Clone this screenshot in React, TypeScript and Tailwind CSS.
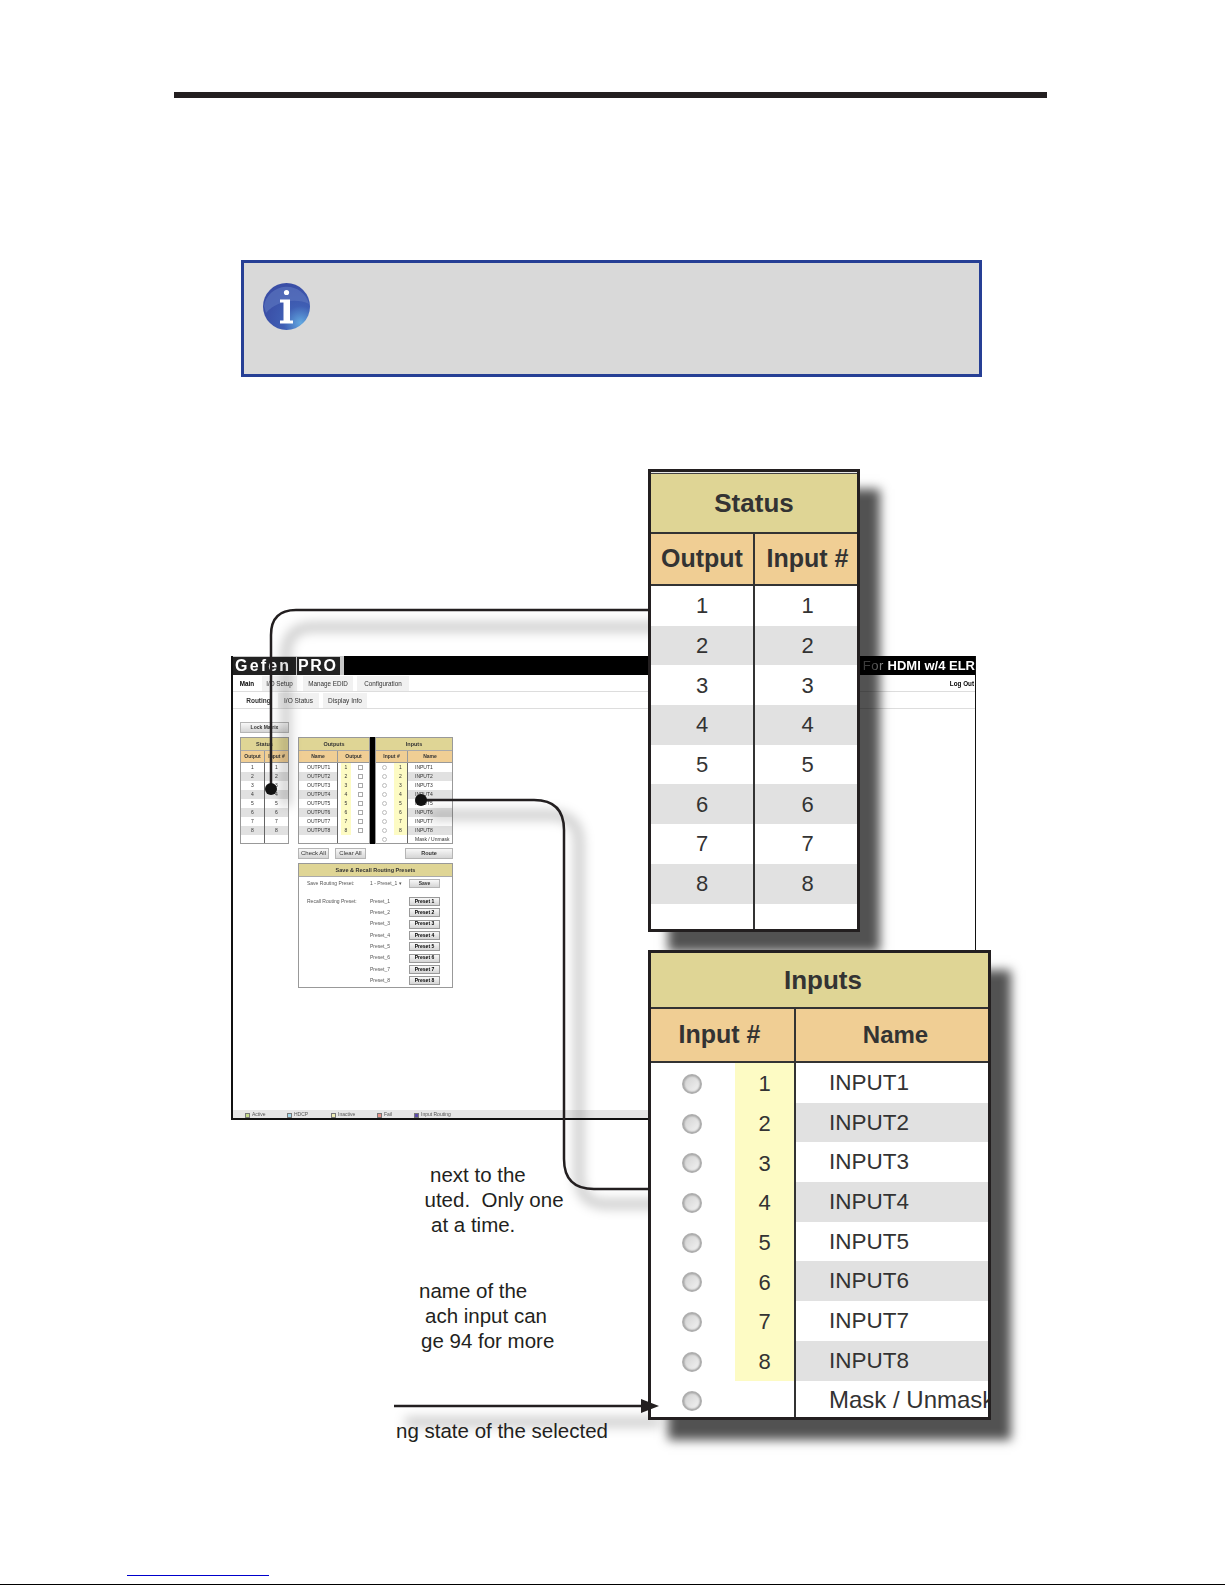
const numbers = [1, 2, 3, 4, 5, 6, 7, 8]
const legend = [
  { label: 'Active', width: 'w-[42px]', color: 'bg-[#c5dc8c]' },
  { label: 'HDCP', width: 'w-[44px]', color: 'bg-[#a5d8ea]' },
  { label: 'Inactive', width: 'w-[46px]', color: 'bg-[#ecebb4]' },
  { label: 'Fail', width: 'w-[37px]', color: 'bg-[#e8938a]' },
  { label: 'Input Routing', width: 'w-[70px]', color: 'bg-[#5a4aa8]' },
]

function MiniButton({ label, className }: { label: string; className: string }) {
  return (
    <div
      className={`flex items-center justify-center border border-[#b5b5b5] bg-gradient-to-b from-[#f8f8f8] to-[#d5d5d5] text-[#333] ${className}`}
    >
      {label}
    </div>
  )
}

function MiniStatus() {
  return (
    <div className="w-[49px] h-[107px] border border-[#999] flex flex-col">
      <div className="h-[13px] shrink-0 bg-[#dfd595] border-b border-[#aaa] flex items-center justify-center text-[5.5px] font-bold">Status</div>
      <div className="h-[12px] shrink-0 bg-[#f0ce94] border-b border-[#999] flex text-[5px] font-bold">
        <div className="w-[24px] border-r border-[#999] flex items-center justify-center">Output</div>
        <div className="flex-1 flex items-center justify-center">Input #</div>
      </div>
      <div className="flex flex-1">
        <div className="w-[24px] border-r border-[#666]">
          {numbers.map((n) => (
            <div key={n} className={`h-[9px] flex items-center justify-center text-[5px] ${n % 2 === 0 ? 'bg-[#e1e1e1]' : ''}`}>{n}</div>
          ))}
        </div>
        <div className="flex-1">
          {numbers.map((n) => (
            <div key={n} className={`h-[9px] flex items-center justify-center text-[5px] ${n % 2 === 0 ? 'bg-[#e1e1e1]' : ''}`}>{n}</div>
          ))}
        </div>
      </div>
    </div>
  )
}

function MiniRouting() {
  return (
    <div className="flex h-[107px] w-[155px]">
      <div className="w-[72px] border border-[#999] flex flex-col">
        <div className="h-[13px] shrink-0 bg-[#dfd595] border-b border-[#aaa] flex items-center justify-center text-[5.5px] font-bold">Outputs</div>
        <div className="h-[12px] shrink-0 bg-[#f0ce94] border-b border-[#999] flex text-[5px] font-bold">
          <div className="w-[39px] border-r border-[#999] flex items-center justify-center">Name</div>
          <div className="flex-1 flex items-center justify-center">Output</div>
        </div>
        <div className="flex flex-1">
          <div className="w-[39px] border-r border-[#666]">
            {numbers.map((n) => (
              <div key={n} className={`h-[9px] pl-[8px] flex items-center text-[5px] ${n % 2 === 0 ? 'bg-[#e1e1e1]' : ''}`}>OUTPUT{n}</div>
            ))}
          </div>
          <div className="flex-1">
            {numbers.map((n) => (
              <div key={n} className="h-[9px] flex items-center text-[5px]">
                <span className="w-[10px] ml-[3px] bg-[#fdfbc4] h-full flex items-center justify-center">{n}</span>
                <span className="ml-[7px] w-[5px] h-[5px] border border-[#aaa] bg-white" />
              </div>
            ))}
          </div>
        </div>
      </div>
      <div className="w-[5px] bg-black shrink-0" />
      <div className="w-[78px] border border-[#999] flex flex-col overflow-hidden">
        <div className="h-[13px] shrink-0 bg-[#dfd595] border-b border-[#aaa] flex items-center justify-center text-[5.5px] font-bold">Inputs</div>
        <div className="h-[12px] shrink-0 bg-[#f0ce94] border-b border-[#999] flex text-[5px] font-bold">
          <div className="w-[32px] border-r border-[#999] flex items-center justify-center">Input #</div>
          <div className="flex-1 flex items-center justify-center">Name</div>
        </div>
        <div className="flex flex-1">
          <div className="w-[32px] border-r border-[#666]">
            {[...numbers, 9].map((n) => (
              <div key={n} className="h-[9px] flex items-center text-[5px]">
                <span className="ml-[6px] w-[5px] h-[5px] rounded-full border border-[#bbb] bg-white" />
                <span className={`ml-[7px] w-[13px] h-full flex items-center justify-center ${n < 9 ? 'bg-[#fdfbc4]' : ''}`}>{n < 9 ? n : ''}</span>
              </div>
            ))}
          </div>
          <div className="flex-1 min-w-0">
            {[...numbers, 9].map((n) => (
              <div key={n} className={`h-[9px] pl-[7px] flex items-center text-[5px] whitespace-nowrap ${n % 2 === 0 ? 'bg-[#e1e1e1]' : ''}`}>{n < 9 ? `INPUT${n}` : 'Mask / Unmask'}</div>
            ))}
          </div>
        </div>
      </div>
    </div>
  )
}

function MiniPresets() {
  return (
    <div className="w-[155px] h-[125px] mt-[4px] border border-[#999]">
      <div className="h-[13px] bg-[#dfd595] border-b border-[#aaa] flex items-center justify-center text-[5.5px] font-bold">Save &amp; Recall Routing Presets</div>
      <div className="flex items-center h-[9px] mt-[2px] pl-[8px] text-[5px] text-[#555]">
        <span className="w-[63px]">Save Routing Preset:</span>
        <span className="w-[39px]">1 - Preset_1 ▾</span>
        <MiniButton label="Save" className="w-[31px] h-[9px] font-bold text-[5px]" />
      </div>
      <div className="flex mt-[8px] pl-[8px] text-[5px] text-[#555]">
        <span className="w-[63px] mt-[2px]">Recall Routing Preset:</span>
        <div className="flex flex-col">
          {numbers.map((n) => (
            <div key={n} className="flex items-center h-[11.3px]">
              <span className="w-[39px]">Preset_{n}</span>
              <div className="w-[31px] h-[9px] flex items-center justify-center border border-[#999] bg-gradient-to-b from-[#f8f8f8] to-[#d5d5d5] text-[5px] font-bold text-black">Preset {n}</div>
            </div>
          ))}
        </div>
      </div>
    </div>
  )
}

function WebScreen() {
  return (
    <div className="absolute left-[231px] top-[656px] w-[745px] h-[464px] border-l-2 border-r border-b-2 border-[#111] bg-white flex flex-col overflow-hidden blur-[0.5px] text-[#333]">
      <div className="h-[19px] shrink-0 bg-black flex items-stretch justify-between">
        <div className="w-[111px] bg-[#c8c8c8] flex items-center">
          <span className="w-[63px] bg-[#222] text-white font-bold text-[16px] leading-[18px] tracking-[2.2px] pl-[2px] whitespace-nowrap">Gefen</span>
          <span className="w-[43px] ml-[1px] bg-[#222] text-white font-bold text-[16px] leading-[18px] tracking-[1.6px] pl-[1px] whitespace-nowrap">PRO</span>
        </div>
        <div className="text-[13px] leading-[19px] text-white font-bold whitespace-nowrap">
          <span className="font-normal text-[#bbb] tracking-[0.6px]">For</span> HDMI w/4 ELR
        </div>
      </div>
      <div className="h-[17px] shrink-0 pt-[1px] border-b border-[#ddd] flex items-stretch text-[6.3px] relative">
        <div className="w-[28px] bg-white flex items-center justify-center font-bold text-black">Main</div>
        <div className="w-[35px] ml-[1px] bg-[#f1f1f1] flex items-center justify-center">I/O Setup</div>
        <div className="w-[50px] ml-[6px] bg-[#f1f1f1] flex items-center justify-center">Manage EDID</div>
        <div className="w-[52px] ml-[4px] bg-[#f1f1f1] flex items-center justify-center">Configuration</div>
        <div className="ml-auto self-center pr-[1px] font-bold text-[6.3px] text-black">Log Out</div>
      </div>
      <div className="h-[17px] shrink-0 pt-[1px] border-b border-[#ddd] pl-[7px] flex items-stretch text-[6.5px]">
        <div className="w-[37px] flex items-center justify-center font-bold">Routing</div>
        <div className="w-[41px] ml-[1px] bg-[#f1f1f1] flex items-center justify-center">I/O Status</div>
        <div className="w-[44px] ml-[4px] bg-[#f1f1f1] flex items-center justify-center">Display Info</div>
      </div>
      <div className="pl-[7px] pt-[13px]">
        <MiniButton label="Lock Matrix" className="w-[49px] h-[11px] font-bold text-[5px]" />
        <div className="flex mt-[4px]">
          <MiniStatus />
          <div className="ml-[9px]">
            <MiniRouting />
            <div className="flex mt-[4px]">
              <MiniButton label="Check All" className="w-[31px] h-[11px] text-[6px]" />
              <MiniButton label="Clear All" className="w-[31px] h-[11px] ml-[6px] text-[6px]" />
              <MiniButton label="Route" className="w-[48px] h-[11px] ml-[39px] font-bold text-[5.5px]" />
            </div>
            <MiniPresets />
          </div>
        </div>
      </div>
      <div className="mt-auto h-[8px] pt-[2px] bg-[#e6e6e6] flex items-center pl-[12px] text-[5px] text-[#555]">
        {legend.map((item) => (
          <div key={item.label} className={`flex items-center gap-[2px] ${item.width}`}>
            <span className={`w-[5px] h-[5px] border border-[#777] ${item.color}`} />
            {item.label}
          </div>
        ))}
      </div>
    </div>
  )
}

function Connectors() {
  return (
    <svg className="absolute left-0 top-0" width="1225" height="1585" fill="none">
      <defs>
        <filter id="soft" x="-20%" y="-20%" width="140%" height="140%">
          <feGaussianBlur stdDeviation="5.5" />
        </filter>
      </defs>
      <g filter="url(#soft)" stroke="#000" strokeOpacity="0.2" strokeWidth="10">
        <path d="M660 627 H314 Q286 627 286 655 V806" />
        <path d="M430 815 H551 Q579 815 579 843 V1176 Q579 1204 607 1204 H660" />
        <path d="M405 1422 H660" />
      </g>
      <path d="M648 610 H296 Q271 610 271 635 V789" stroke="#231f20" strokeWidth="2.5" />
      <path d="M421 800 H534 Q564 800 564 830 V1159 Q564 1189 594 1189 H648" stroke="#231f20" strokeWidth="2.5" />
      <circle cx="271" cy="789" r="6" fill="#111" />
      <circle cx="421" cy="800" r="6" fill="#111" />
    </svg>
  )
}

function StatusPanel() {
  return (
    <div className="absolute left-[648px] top-[469px] w-[212px] h-[463px] bg-white border-[3px] border-[#231f20] shadow-[20px_20px_10px_rgba(0,0,0,0.68)] text-[#333] flex flex-col">
      <div className="h-[62px] shrink-0 bg-[#dfd595] border-b-2 border-[#333] flex flex-col">
        <div className="h-[1px] shrink-0 bg-[#e8e8e8]" />
        <div className="h-[1px] shrink-0 bg-[#444]" />
        <div className="flex-1 flex items-center justify-center text-[26px] font-bold">Status</div>
      </div>
      <div className="h-[52px] shrink-0 bg-[#f0ce94] border-b-2 border-[#333] flex text-[25px] font-bold">
        <div className="w-[104px] border-r-2 border-[#333] flex items-center justify-center">Output</div>
        <div className="flex-1 flex items-center justify-center pl-[3px]">Input #</div>
      </div>
      <div className="flex-1 relative flex">
        <div className="w-[104px] border-r-2 border-[#333]">
          {numbers.map((n) => (
            <div key={n} className={`h-[39.7px] flex items-center justify-center text-[22px] ${n % 2 === 0 ? 'bg-[#e1e1e1]' : ''}`}>{n}</div>
          ))}
        </div>
        <div className="flex-1">
          {numbers.map((n) => (
            <div key={n} className={`h-[39.7px] flex items-center justify-center pl-[3px] text-[22px] ${n % 2 === 0 ? 'bg-[#e1e1e1]' : ''}`}>{n}</div>
          ))}
        </div>
      </div>
    </div>
  )
}

function Radio() {
  return (
    <span className="w-[20px] h-[20px] rounded-full border-2 border-[#aeaeae] bg-gradient-to-br from-[#d0d0d0] to-[#f4f4f4] shadow-[inset_0_0_2px_rgba(0,0,0,0.35)]" />
  )
}

function InputsPanel() {
  return (
    <div className="absolute left-[648px] top-[950px] w-[343px] h-[470px] bg-white border-[3px] border-[#231f20] shadow-[20px_20px_10px_rgba(0,0,0,0.68)] text-[#333] flex flex-col overflow-hidden">
      <div className="h-[56px] shrink-0 bg-[#dfd595] border-b-2 border-[#333] flex items-center justify-center pl-[7px] text-[26px] font-bold">Inputs</div>
      <div className="h-[54px] shrink-0 bg-[#f0ce94] border-b-2 border-[#333] flex font-bold">
        <div className="w-[145px] border-r-2 border-[#333] flex items-center justify-center pr-[6px] text-[25px]">Input #</div>
        <div className="flex-1 flex items-center justify-center pl-[7px] text-[24px]">Name</div>
      </div>
      <div className="flex flex-1 min-h-0">
        <div className="w-[145px] border-r-2 border-[#333] shrink-0">
          {[...numbers, 9].map((n) => (
            <div key={n} className="h-[39.7px] flex items-center">
              <span className="w-[82px] pt-[2px] flex justify-center"><Radio /></span>
              <span className={`w-[59px] ml-[2px] h-full pt-[2px] flex items-center justify-center text-[22px] ${n < 9 ? 'bg-[#fdfbc4]' : ''}`}>{n < 9 ? n : ''}</span>
            </div>
          ))}
        </div>
        <div className="flex-1 min-w-0">
          {[...numbers, 9].map((n) => (
            <div key={n} className={`h-[39.7px] pl-[33px] flex items-center whitespace-nowrap ${n === 9 ? 'text-[24px]' : 'text-[22.5px]'} ${n % 2 === 0 ? 'bg-[#e1e1e1]' : ''}`}>
              {n < 9 ? `INPUT${n}` : 'Mask / Unmask'}
            </div>
          ))}
        </div>
      </div>
    </div>
  )
}

function InfoIcon() {
  return (
    <svg width="47" height="47" viewBox="0 0 47 47" className="shrink-0">
      <defs>
        <radialGradient id="infoFill" cx="0.8" cy="0.85" r="0.8">
          <stop offset="0" stopColor="#62a8e0" />
          <stop offset="0.45" stopColor="#3f5fb4" />
          <stop offset="1" stopColor="#3a4ea6" />
        </radialGradient>
      </defs>
      <circle cx="23.5" cy="23.5" r="23.5" fill="url(#infoFill)" />
      <path d="M1 23 A23 23 0 0 1 46 21 C34 15 14 17 3 30 Z" fill="#5a74bd" opacity="0.7" />
      <circle cx="23.5" cy="9.5" r="2.6" fill="#fff" />
      <path d="M17 16.5 H27 V37.5 H30 V40.5 H17 V37.5 H20.5 V19.5 H17 Z" fill="#fff" />
    </svg>
  )
}

export default function App() {
  return (
    <div className="relative w-[1225px] h-[1585px] overflow-hidden bg-white font-['Liberation_Sans',Arial,sans-serif]">
      <div className="pt-[92px] pl-[174px]">
        <div className="w-[873px] h-[6px] bg-[#231f20]" />
      </div>
      <div className="ml-[241px] mt-[162px] w-[741px] h-[117px] border-[3px] border-[#263f95] bg-[#d9d9d9] pl-[19px] pt-[20px]">
        <InfoIcon />
      </div>

      <WebScreen />
      <Connectors />

      <div className="absolute left-[419px] top-[1162px] w-[180px] text-[20.5px] leading-[25px] text-[#231f20] whitespace-pre">
        <div className="pl-[11px]">next to the</div>
        <div className="pl-[5.5px]">uted.  Only one</div>
        <div className="pl-[12px]">at a time.</div>
      </div>
      <div className="absolute left-[419px] top-[1278px] w-[180px] text-[20.5px] leading-[25px] text-[#231f20] whitespace-pre">
        <div>name of the</div>
        <div className="pl-[6px]">ach input can</div>
        <div className="pl-[2px]">ge 94 for more</div>
      </div>
      <div className="absolute left-[396px] top-[1418px] text-[20.5px] leading-[25px] text-[#231f20] whitespace-pre">ng state of the selected</div>

      <StatusPanel />
      <InputsPanel />

      <svg className="absolute left-0 top-0" width="1225" height="1585" fill="none">
        <path d="M394 1406 H645" stroke="#231f20" strokeWidth="2.5" />
        <path d="M641 1399 L659 1406 L641 1413 Z" fill="#231f20" />
      </svg>

      <div className="absolute left-[127px] top-[1575px] w-[142px] h-[1px] bg-[#0000cc]" />
      <div className="absolute left-0 top-[1584px] w-full h-[1px] bg-black" />
    </div>
  )
}
